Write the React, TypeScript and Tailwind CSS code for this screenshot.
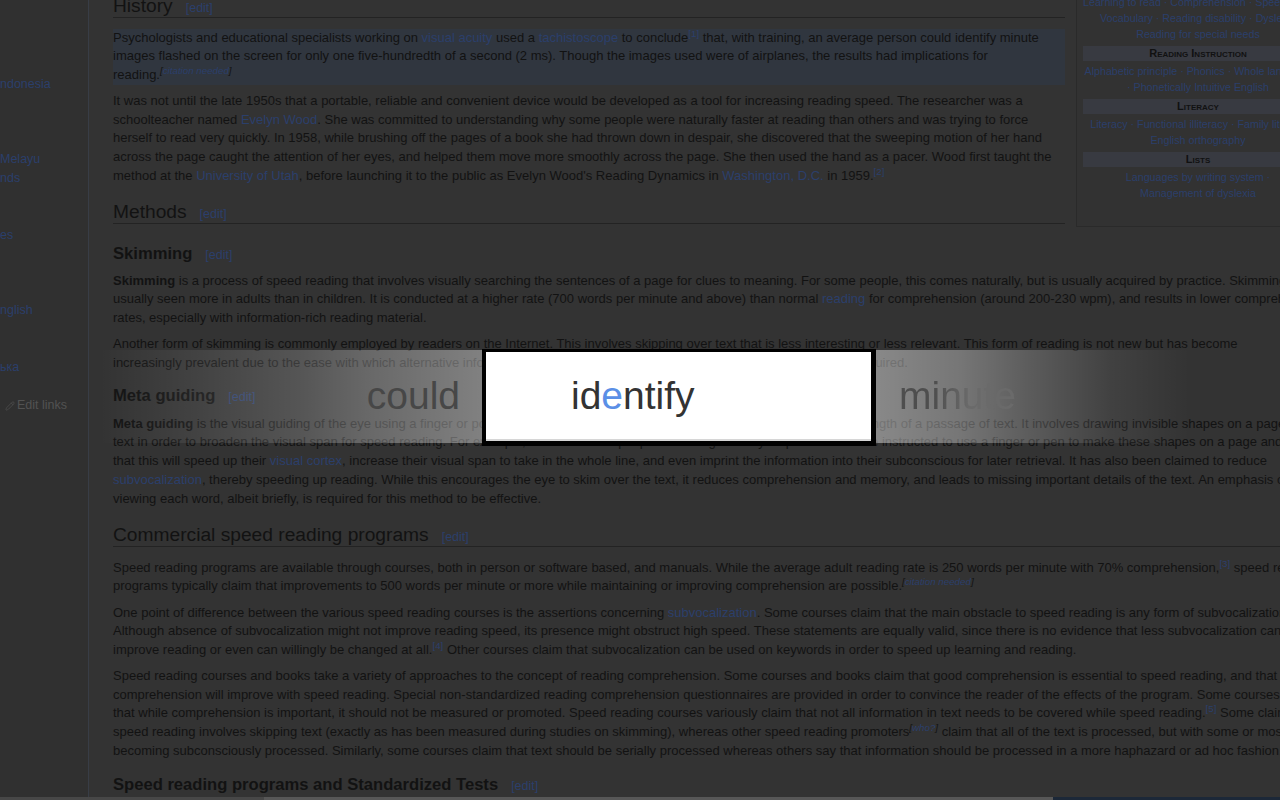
import React from 'react';
import { Pencil } from 'lucide-react';

const A: React.FC<{ children: React.ReactNode }> = ({ children }) => (
  <span className="text-[#2b3f6b]">{children}</span>
);

const Ref: React.FC<{ n: string }> = ({ n }) => <sup className="text-[#2b3f6b]">[{n}]</sup>;

const Cn: React.FC<{ t?: string }> = ({ t = 'citation needed' }) => (
  <sup className="italic">
    [<span className="text-[#2b3f6b]">{t}</span>]
  </sup>
);

const Edit = () => <span className="ml-[13px] text-[12.5px] leading-none font-normal text-[#2b3f6b]">[edit]</span>;

const P: React.FC<{ className?: string; children: React.ReactNode }> = ({ className = '', children }) => (
  <p className={`whitespace-nowrap leading-[18.75px] ${className}`}>{children}</p>
);

const H2: React.FC<{ className?: string; children: React.ReactNode }> = ({ className = '', children }) => (
  <h2 className={`h-[23px] text-[19.2px] leading-[22px] border-b border-[#232323] whitespace-nowrap ${className}`}>
    {children}
    <Edit />
  </h2>
);

const H3: React.FC<{ className?: string; children: React.ReactNode }> = ({ className = '', children }) => (
  <h3 className={`h-[22px] text-[16.6px] font-bold leading-[22px] whitespace-nowrap ${className}`}>
    {children}
    <Edit />
  </h3>
);

const sidebar = ['ndonesia', '', '', '', 'Melayu', 'nds', '', '', 'es', '', '', '', 'nglish', '', '', 'ька'];

const InfoHead: React.FC<{ children: React.ReactNode }> = ({ children }) => (
  <div className="mt-[4px] h-[15px] leading-[15px] bg-[#383a41] text-[#111] font-bold [font-variant:small-caps] text-[11px]">
    {children}
  </div>
);

const Infobox = () => (
  <div className="w-[244px] shrink-0 -mt-[4px] border border-[#2a2a2a] bg-[#323232] px-[6px] pt-[2px] pb-[25px] text-center text-[10.7px] leading-[16px] whitespace-nowrap text-[#2b3f6b]">
    <div>Learning to read · Comprehension · Speed reading</div>
    <div>Vocabulary · Reading disability · Dyslexia</div>
    <div>Reading for special needs</div>
    <InfoHead>Reading Instruction</InfoHead>
    <div className="mt-[2px]">Alphabetic principle · Phonics · Whole language</div>
    <div>· Phonetically Intuitive English</div>
    <InfoHead>Literacy</InfoHead>
    <div className="mt-[2px]">Literacy · Functional illiteracy · Family literacy</div>
    <div>English orthography</div>
    <InfoHead>Lists</InfoHead>
    <div className="mt-[2px]">Languages by writing system ·</div>
    <div>Management of dyslexia</div>
  </div>
);

export default function App() {
  return (
    <div className="relative w-[1280px] h-[800px] overflow-hidden flex flex-col bg-[#333333] text-[#121212] font-['Liberation_Sans',Arial,sans-serif]">
      <div className="flex h-[797px] overflow-hidden">
        <aside className="w-[89px] shrink-0 bg-[#303030] border-r border-[#383d46] pt-[74.5px] text-[12.5px] leading-[18.9px] whitespace-nowrap overflow-hidden">
          {sidebar.map((s, i) => (
            <div key={i} className="h-[18.9px] text-[#2b3f6b]">{s}</div>
          ))}
          <div className="mt-[19.5px] pl-[5px] flex items-center gap-[2px] text-[#525252]">
            <Pencil size={10} strokeWidth={1.6} />
            <span>Edit links</span>
          </div>
        </aside>

        <main className="flex-1 min-w-0 overflow-hidden pl-[24px] text-[13px]">
          <div className="-mt-[5px]">
            <div className="flex items-start gap-[11px]">
              <div className="w-[952px] shrink-0">
                <H2>History</H2>
                <P className="mt-[10.5px] bg-[#30363f]">
                  Psychologists and educational specialists working on <A>visual acuity</A> used a <A>tachistoscope</A> to conclude<Ref n="1" /> that, with training, an average person could identify minute
                  <br />
                  images flashed on the screen for only one five-hundredth of a second (2 ms). Though the images used were of airplanes, the results had implications for
                  <br />
                  reading.<Cn />
                </P>
                <P className="mt-[7px]">
                  It was not until the late 1950s that a portable, reliable and convenient device would be developed as a tool for increasing reading speed. The researcher was a
                  <br />
                  schoolteacher named <A>Evelyn Wood</A>. She was committed to understanding why some people were naturally faster at reading than others and was trying to force
                  <br />
                  herself to read very quickly. In 1958, while brushing off the pages of a book she had thrown down in despair, she discovered that the sweeping motion of her hand
                  <br />
                  across the page caught the attention of her eyes, and helped them move more smoothly across the page. She then used the hand as a pacer. Wood first taught the
                  <br />
                  method at the <A>University of Utah</A>, before launching it to the public as Evelyn Wood's Reading Dynamics in <A>Washington, D.C.</A> in 1959.<Ref n="2" />
                </P>
                <H2 className="mt-[15.5px]">Methods</H2>
              </div>
              <Infobox />
            </div>

            <H3 className="mt-[16px]">Skimming</H3>
            <P className="mt-[6.5px]">
              <b>Skimming</b> is a process of speed reading that involves visually searching the sentences of a page for clues to meaning. For some people, this comes naturally, but is usually acquired by practice. Skimming is
              <br />
              usually seen more in adults than in children. It is conducted at a higher rate (700 words per minute and above) than normal <A>reading</A> for comprehension (around 200-230 wpm), and results in lower comprehension
              <br />
              rates, especially with information-rich reading material.
            </P>
            <P className="mt-[7px]">
              Another form of skimming is commonly employed by readers on the Internet. This involves skipping over text that is less interesting or less relevant. This form of reading is not new but has become
              <br />
              increasingly prevalent due to the ease with which alternative information is found and the amount of information that might not be required.
            </P>

            <H3 className="mt-[12.75px]">Meta guiding</H3>
            <P className="mt-[7.5px]">
              <b>Meta guiding</b> is the visual guiding of the eye using a finger or pointer, such as a pen, in order for the eye to move faster along the length of a passage of text. It involves drawing invisible shapes on a page of
              <br />
              text in order to broaden the visual span for speed reading. For example, an audience of people that are guided by a speed reader are instructed to use a finger or pen to make these shapes on a page and told
              <br />
              that this will speed up their <A>visual cortex</A>, increase their visual span to take in the whole line, and even imprint the information into their subconscious for later retrieval. It has also been claimed to reduce
              <br />
              <A>subvocalization</A>, thereby speeding up reading. While this encourages the eye to skim over the text, it reduces comprehension and memory, and leads to missing important details of the text. An emphasis on
              <br />
              viewing each word, albeit briefly, is required for this method to be effective.
            </P>

            <H2 className="mt-[15.75px]">Commercial speed reading programs</H2>
            <P className="mt-[11.5px]">
              Speed reading programs are available through courses, both in person or software based, and manuals. While the average adult reading rate is 250 words per minute with 70% comprehension,<Ref n="3" /> speed reading
              <br />
              programs typically claim that improvements to 500 words per minute or more while maintaining or improving comprehension are possible.<Cn />
            </P>
            <P className="mt-[7.5px]">
              One point of difference between the various speed reading courses is the assertions concerning <A>subvocalization</A>. Some courses claim that the main obstacle to speed reading is any form of subvocalization.
              <br />
              Although absence of subvocalization might not improve reading speed, its presence might obstruct high speed. These statements are equally valid, since there is no evidence that less subvocalization can
              <br />
              improve reading or even can willingly be changed at all.<Ref n="4" /> Other courses claim that subvocalization can be used on keywords in order to speed up learning and reading.
            </P>
            <P className="mt-[7px]">
              Speed reading courses and books take a variety of approaches to the concept of reading comprehension. Some courses and books claim that good comprehension is essential to speed reading, and that
              <br />
              comprehension will improve with speed reading. Special non-standardized reading comprehension questionnaires are provided in order to convince the reader of the effects of the program. Some courses
              <br />
              that while comprehension is important, it should not be measured or promoted. Speed reading courses variously claim that not all information in text needs to be covered while speed reading.<Ref n="5" /> Some claim
              <br />
              speed reading involves skipping text (exactly as has been measured during studies on skimming), whereas other speed reading promoters<Cn t="who?" /> claim that all of the text is processed, but with some or most
              <br />
              becoming subconsciously processed. Similarly, some courses claim that text should be serially processed whereas others say that information should be processed in a more haphazard or ad hoc fashion.
            </P>

            <H3 className="mt-[13.5px]">Speed reading programs and Standardized Tests</H3>
          </div>
        </main>
      </div>

      {/* bottom strip */}
      <div className="h-[3px] flex">
        <div className="w-[264px] bg-[#474747]" />
        <div className="w-[789px] bg-[#575757]" />
        <div className="flex-1 bg-[#1c2838]" />
      </div>

      {/* reader band */}
      <div className="absolute left-0 right-0 top-[350px] h-[93px] flex bg-[linear-gradient(to_right,rgba(255,255,255,0)_100px,rgba(255,255,255,0.08)_200px,rgba(255,255,255,0.17)_300px,rgba(255,255,255,0.26)_366px,rgba(255,255,255,0.38)_482px,rgba(255,255,255,0.42)_876px,rgba(255,255,255,0.33)_960px,rgba(255,255,255,0.2)_1030px,rgba(255,255,255,0.07)_1110px,rgba(255,255,255,0)_1190px)]">
        <div className="w-[482px] shrink-0 flex items-center justify-end pr-[22px]">
          <span className="text-[39px] text-[#474747]">could</span>
        </div>
        <div className="w-[394px] h-[97px] shrink-0 -mt-[1px] bg-white border-black border-t-[3px] border-l-[4px] border-r-[5px] border-b-[5px] shadow-[inset_0_-2px_0_#d6d6d6] flex items-center pl-[85px]">
          <span className="text-[39px] text-[#333333]">
            id<span className="text-[#5b8fe6]">e</span>ntify
          </span>
        </div>
        <div className="flex items-center pl-[23px]">
          <span className="text-[39px] bg-[linear-gradient(to_right,#4e4e4e_30%,#6a6a6a_60%)] bg-clip-text text-transparent">minute</span>
        </div>
      </div>
    </div>
  );
}
